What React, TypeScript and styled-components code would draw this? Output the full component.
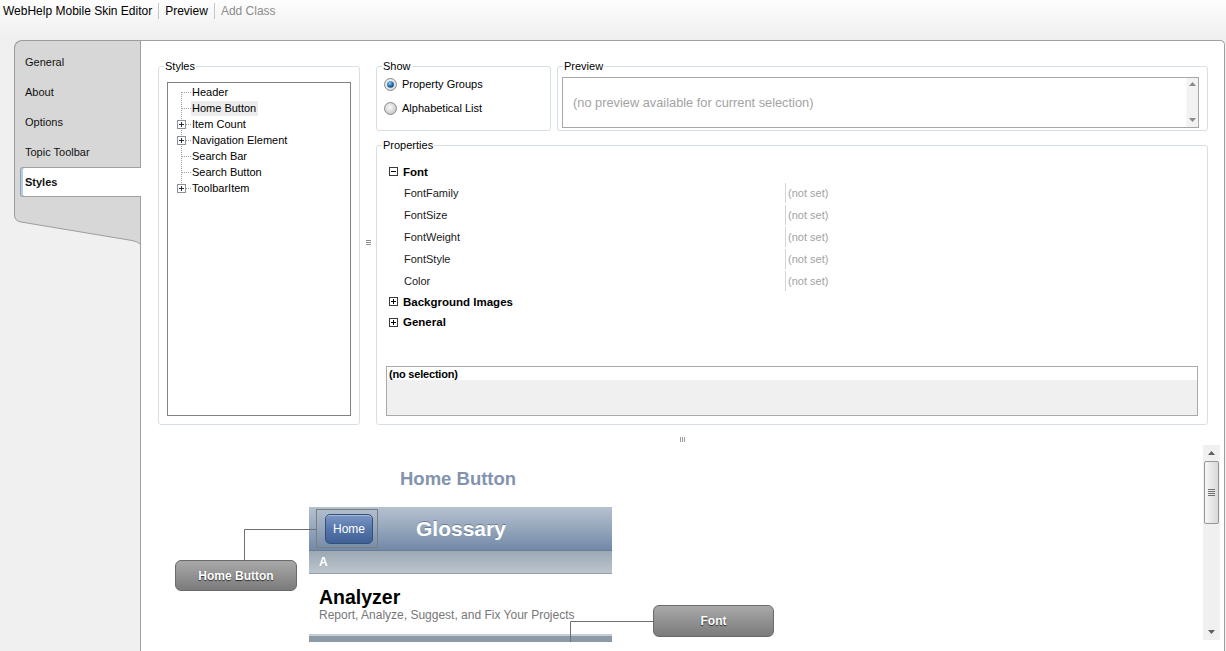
import React from "react";
import styled, { createGlobalStyle } from "styled-components";

const GlobalStyle = createGlobalStyle`
  *, *::before, *::after { box-sizing: border-box; }
  html, body { margin: 0; padding: 0; height: 100%; overflow: hidden; }
  body {
    font-family: "Liberation Sans", Arial, sans-serif;
    font-size: 11px;
    color: #000;
    background: linear-gradient(#fdfdfd 0px, #f0f0f0 36px);
  }
  #root { height: 100%; }
`;

const Window = styled.div`
  height: 100vh;
  display: flex;
  flex-direction: column;
`;

const TopBar = styled.div`
  height: 22px;
  display: flex;
  align-items: center;
  padding-left: 3px;
  font-size: 12px;
`;

const MenuItem = styled.span<{ $disabled?: boolean }>`
  color: ${(p) => (p.$disabled ? "#8c8c8c" : "#000")};
  padding: 0 6px;
  &:first-child { padding-left: 0; }
`;

const MenuSep = styled.span`
  width: 1px;
  height: 16px;
  background: #c6c6c6;
`;

const Workspace = styled.div`
  flex: 1;
  min-height: 0;
  display: flex;
  margin-top: 18px;
  padding-left: 14px;
  padding-right: 1px;
`;

const TabColumn = styled.div`
  width: 126px;
  flex: none;
  display: flex;
  flex-direction: column;
`;

const TabList = styled.div`
  background: #d7d7d7;
  border-top: 1px solid #9c9c9c;
  border-left: 1px solid #9c9c9c;
  border-top-left-radius: 8px;
  padding: 6px 0 13px 0;
  display: flex;
  flex-direction: column;
`;

const Tab = styled.div<{ $active?: boolean }>`
  height: 30px;
  display: flex;
  align-items: center;
  margin-left: 5px;
  padding-left: 4px;
  border: 1px solid transparent;
  border-right: none;
  color: #111;
  ${(p) =>
    p.$active &&
    `
    position: relative;
    z-index: 2;
    margin-right: -1px;
    background: #fff;
    border-color: #a0a0a0;
    border-top-left-radius: 3px;
    border-bottom-left-radius: 3px;
    box-shadow: inset 2px 0 0 #a8d0f4;
    font-weight: bold;
  `}
`;

const MainPanel = styled.div`
  flex: 1;
  position: relative;
  background: #fff;
  border-top: 1px solid #a0a0a0;
  border-left: 1px solid #a0a0a0;
  border-right: 1px solid #a0a0a0;
  border-top-right-radius: 5px;
  display: flex;
  flex-direction: column;
`;

const EditorArea = styled.div`
  display: flex;
  padding: 18px 0 0 17px;
  height: 384px;
`;

const Group = styled.fieldset<{ $w?: number }>`
  margin: 0;
  padding: 0;
  min-width: 0;
  border: 1px solid #d5dfe5;
  border-radius: 3px;
  ${(p) => (p.$w ? `width: ${p.$w}px; flex: none;` : "flex: 1;")}
  display: flex;
  flex-direction: column;
`;

const Legend = styled.legend`
  margin-left: 5px;
  padding: 0 1px;
  font-size: 11px;
  line-height: 14px;
  color: #000;
`;

const GroupBody = styled.div<{ $pad: string }>`
  flex: 1;
  min-height: 0;
  padding: ${(p) => p.$pad};
  display: flex;
  flex-direction: column;
`;

const TreeBox = styled.div`
  flex: 1;
  border: 1px solid #828282;
  background: #fff;
  padding-top: 1px;
`;

const TreeRow = styled.div`
  height: 16px;
  display: flex;
  align-items: center;
  padding-left: 9px;
`;

const TreeLabel = styled.span<{ $selected?: boolean }>`
  margin-left: -1px;
  padding: 1px 2px 1px 1px;
  line-height: 13px;
  background: ${(p) => (p.$selected ? "#ececec" : "transparent")};
`;

const VGrip = styled.div`
  width: 16px;
  flex: none;
  display: flex;
  align-items: center;
  justify-content: center;
`;

const RightColumn = styled.div`
  width: 832px;
  flex: none;
  display: flex;
  flex-direction: column;
  gap: 7px;
`;

const TopRow = styled.div`
  height: 72px;
  display: flex;
  gap: 6px;
`;

const RadioRow = styled.label`
  height: 16px;
  display: flex;
  align-items: center;
  gap: 5px;
  & + & { margin-top: 8px; }
`;

const PreviewBox = styled.div`
  flex: 1;
  border: 1px solid #a7a7a7;
  display: flex;
`;

const PreviewText = styled.div`
  flex: 1;
  display: flex;
  align-items: center;
  padding: 0 0 1px 10px;
  font-size: 12.8px;
  color: #a3a3a3;
`;

const MiniScroll = styled.div`
  width: 12px;
  background: #f2f2f2;
  border-left: 1px solid #f8f8f8;
  display: flex;
  flex-direction: column;
  justify-content: space-between;
  align-items: center;
  padding: 4px 0 5px;
`;

const PropList = styled.div`
  flex: 1;
  display: flex;
  flex-direction: column;
  padding-top: 9px;
`;

const GroupHeader = styled.div<{ $h: number }>`
  height: ${(p) => p.$h}px;
  display: flex;
  align-items: center;
  gap: 5px;
  padding-left: 3px;
  font-weight: bold;
  font-size: 11.5px;
`;

const PropRow = styled.div`
  height: 22px;
  display: grid;
  grid-template-columns: 399px 1fr;
`;

const PropName = styled.div`
  display: flex;
  align-items: center;
  padding-left: 18px;
  color: #1a1a1a;
`;

const PropValue = styled.div`
  display: flex;
  align-items: center;
  margin: 1px 0;
  padding-left: 2px;
  border-left: 1px solid #d4d4d4;
  color: #a3a3a3;
`;

const DescBox = styled.div`
  height: 50px;
  border: 1px solid #a9a9a9;
  background: #f0f0f0;
`;

const DescTitle = styled.div`
  height: 13px;
  background: #fff;
  padding: 1px 0 0 2px;
  line-height: 13px;
  font-weight: bold;
  letter-spacing: -0.2px;
`;

const HSplitter = styled.div`
  height: 20px;
  display: flex;
  justify-content: center;
  padding-top: 12px;
`;

const CanvasRow = styled.div`
  height: 197px;
  display: flex;
`;

const Diagram = styled.div`
  flex: 1;
  position: relative;
  overflow: hidden;
  font-family: "Liberation Sans", Arial, sans-serif;
`;

const DiagramTitle = styled.div`
  position: absolute;
  left: 259px;
  top: 24px;
  line-height: 20px;
  font-size: 18.5px;
  font-weight: bold;
  color: #8294ad;
`;

const Phone = styled.div`
  position: absolute;
  left: 168px;
  top: 62px;
  width: 303px;
  height: 150px;
  background: #fff;
  display: flex;
  flex-direction: column;
`;

const PhoneHeader = styled.div`
  height: 44px;
  flex: none;
  display: flex;
  align-items: flex-start;
  padding-left: 7px;
  background: linear-gradient(#b5c1cf, #95a6bc 50%, #7189a8);
  border-bottom: 1px solid #697d97;
`;

const HomeOutline = styled.div`
  margin-top: 2px;
  border: 1px solid #7d7d7d;
  padding: 4px 4px 3px 8px;
`;

const HomeBtn = styled.div`
  width: 48px;
  height: 30px;
  border: 1px solid #34507c;
  border-radius: 5px;
  background: linear-gradient(#7c97c4, #5676aa 50%, #3f6096);
  box-shadow: inset 0 1px 0 rgba(255, 255, 255, 0.35);
  color: #fff;
  font-size: 12px;
  display: flex;
  align-items: center;
  justify-content: center;
`;

const PhoneTitle = styled.div`
  margin-left: 38px;
  align-self: center;
  color: #fff;
  font-size: 21px;
  font-weight: bold;
  text-shadow: 0 -1px 0 rgba(60, 80, 110, 0.5);
`;

const SectionBar = styled.div`
  height: 23px;
  flex: none;
  display: flex;
  align-items: center;
  padding-left: 10px;
  background: linear-gradient(#9ba8b4, #bcc5cd);
  border-bottom: 1px solid #939fab;
  color: #fff;
  font-size: 12px;
  font-weight: bold;
`;

const ItemBody = styled.div`
  height: 60px;
  flex: none;
  padding: 12px 0 0 10px;
  display: flex;
  flex-direction: column;
`;

const ItemTitle = styled.div`
  font-size: 19.5px;
  font-weight: bold;
  line-height: 22px;
  color: #000;
`;

const ItemSub = styled.div`
  font-size: 12px;
  line-height: 15px;
  color: #777;
`;

const PhoneFooter = styled.div`
  flex: 1;
  border-top: 2px solid #c7ced5;
  background: #8c9aa8;
`;

const Callout = styled.div<{ $x: number; $y: number; $w: number; $h: number }>`
  position: absolute;
  left: ${(p) => p.$x}px;
  top: ${(p) => p.$y}px;
  width: ${(p) => p.$w}px;
  height: ${(p) => p.$h}px;
  border: 1px solid #6a6a6a;
  border-radius: 6px;
  background: linear-gradient(#a9a9a9, #7b7b7b);
  color: #fff;
  font-size: 12px;
  font-weight: bold;
  text-shadow: 0 1px 1px #2a2a2a;
  display: flex;
  align-items: center;
  justify-content: center;
`;

const Connectors = styled.svg`
  position: absolute;
  left: 0;
  top: 0;
  pointer-events: none;
`;

const VScroll = styled.div`
  width: 17px;
  flex: none;
  margin: 0 4px 2px 0;
  background: #f0f0f0;
  display: flex;
  flex-direction: column;
  align-items: center;
`;

const ScrollBtn = styled.div`
  height: 16px;
  width: 100%;
  flex: none;
  display: flex;
  align-items: center;
  justify-content: center;
`;

const Thumb = styled.div`
  width: 15px;
  height: 63px;
  flex: none;
  border: 1px solid #979797;
  border-radius: 2px;
  background: linear-gradient(90deg, #f7f7f7, #e7e7e7 50%, #d9d9d9);
  display: flex;
  align-items: center;
  justify-content: center;
`;

const Track = styled.div`
  flex: 1;
`;

function Arrow({ dir, color = "#606060" }: { dir: "up" | "down"; color?: string }) {
  return (
    <svg width="7" height="4" viewBox="0 0 7 4">
      <path d={dir === "up" ? "M3.5 0 L7 4 L0 4 Z" : "M0 0 L7 0 L3.5 4 Z"} fill={color} />
    </svg>
  );
}

function Branch({ pos, expandable }: { pos: "first" | "mid" | "last"; expandable: boolean }) {
  const y1 = pos === "first" ? 8 : 0;
  const y2 = pos === "last" ? 9 : 16;
  return (
    <svg width="15" height="16" viewBox="0 0 15 16">
      <line x1="4.5" y1={y1} x2="4.5" y2={y2} stroke="#a0a0a0" strokeDasharray="1 1" />
      <line x1="5" y1="8.5" x2="15" y2="8.5" stroke="#a0a0a0" strokeDasharray="1 1" />
      {expandable && (
        <>
          <rect x="0.5" y="4.5" width="8" height="8" fill="#fff" stroke="#8f8f8f" />
          <line x1="2" y1="8.5" x2="7" y2="8.5" stroke="#1f2f45" />
          <line x1="4.5" y1="6" x2="4.5" y2="11" stroke="#1f2f45" />
        </>
      )}
    </svg>
  );
}

function ExpandBox({ open }: { open: boolean }) {
  return (
    <svg width="9" height="9" viewBox="0 0 9 9">
      <rect x="0.5" y="0.5" width="8" height="8" fill="#fff" stroke="#3a3a3a" />
      <line x1="2" y1="4.5" x2="7" y2="4.5" stroke="#000" />
      {!open && <line x1="4.5" y1="2" x2="4.5" y2="7" stroke="#000" />}
    </svg>
  );
}

function Radio({ on }: { on: boolean }) {
  const id = on ? "rOn" : "rOff";
  return (
    <svg width="13" height="13" viewBox="0 0 13 13">
      <defs>
        <radialGradient id={id} cx="45%" cy="40%" r="60%">
          <stop offset="0" stopColor="#fbfbfb" />
          <stop offset="1" stopColor={on ? "#d8d8d8" : "#c4c4c4"} />
        </radialGradient>
        <radialGradient id="rDot" cx="40%" cy="35%" r="65%">
          <stop offset="0" stopColor="#9ad6ff" />
          <stop offset="0.5" stopColor="#2c7fc4" />
          <stop offset="1" stopColor="#0e3f73" />
        </radialGradient>
      </defs>
      <circle cx="6.5" cy="6.5" r="6" fill={`url(#${id})`} stroke="#8c8c8c" />
      {on && <circle cx="6.5" cy="6.5" r="3.3" fill="url(#rDot)" />}
    </svg>
  );
}

function TabFoot() {
  return (
    <svg width="126" height="36" viewBox="0 0 126 36" style={{ display: "block" }}>
      <path d="M0.5 0 V5 Q0.5 11 7 12 L118 30.5 Q124 31.5 126 34 V0 Z" fill="#d7d7d7" />
      <path d="M0.5 0 V5 Q0.5 11 7 12 L118 30.5 Q124 31.5 126 34" fill="none" stroke="#9c9c9c" />
    </svg>
  );
}

const tabs = ["General", "About", "Options", "Topic Toolbar", "Styles"];

const styleItems = [
  { name: "Header", expandable: false },
  { name: "Home Button", expandable: false, selected: true },
  { name: "Item Count", expandable: true },
  { name: "Navigation Element", expandable: true },
  { name: "Search Bar", expandable: false },
  { name: "Search Button", expandable: false },
  { name: "ToolbarItem", expandable: true },
];

const fontProps = ["FontFamily", "FontSize", "FontWeight", "FontStyle", "Color"];

export default function App() {
  return (
    <>
      <GlobalStyle />
      <Window>
        <TopBar>
          <MenuItem>WebHelp Mobile Skin Editor</MenuItem>
          <MenuSep />
          <MenuItem>Preview</MenuItem>
          <MenuSep />
          <MenuItem $disabled>Add Class</MenuItem>
        </TopBar>
        <Workspace>
          <TabColumn>
            <TabList>
              {tabs.map((t) => (
                <Tab key={t} $active={t === "Styles"}>
                  {t}
                </Tab>
              ))}
            </TabList>
            <TabFoot />
          </TabColumn>
          <MainPanel>
            <EditorArea>
              <Group $w={202}>
                <Legend>Styles</Legend>
                <GroupBody $pad="9px 8px 8px 8px">
                  <TreeBox>
                    {styleItems.map((it, i) => (
                      <TreeRow key={it.name}>
                        <Branch
                          pos={i === 0 ? "first" : i === styleItems.length - 1 ? "last" : "mid"}
                          expandable={it.expandable}
                        />
                        <TreeLabel $selected={it.selected}>{it.name}</TreeLabel>
                      </TreeRow>
                    ))}
                  </TreeBox>
                </GroupBody>
              </Group>
              <VGrip>
                <svg width="5" height="5" viewBox="0 0 5 5">
                  <path d="M0 0.5 H5 M0 2.5 H5 M0 4.5 H5" stroke="#8a8a8a" />
                </svg>
              </VGrip>
              <RightColumn>
                <TopRow>
                  <Group $w={175}>
                    <Legend>Show</Legend>
                    <GroupBody $pad="3px 0 0 7px">
                      <RadioRow>
                        <Radio on />
                        Property Groups
                      </RadioRow>
                      <RadioRow>
                        <Radio on={false} />
                        Alphabetical List
                      </RadioRow>
                    </GroupBody>
                  </Group>
                  <Group>
                    <Legend>Preview</Legend>
                    <GroupBody $pad="4px 8px 2px 4px">
                      <PreviewBox>
                        <PreviewText>(no preview available for current selection)</PreviewText>
                        <MiniScroll>
                          <Arrow dir="up" color="#8a8a8a" />
                          <Arrow dir="down" color="#8a8a8a" />
                        </MiniScroll>
                      </PreviewBox>
                    </GroupBody>
                  </Group>
                </TopRow>
                <Group>
                  <Legend>Properties</Legend>
                  <GroupBody $pad="0 9px 8px 9px">
                    <PropList>
                      <GroupHeader $h={21}>
                        <ExpandBox open />
                        Font
                      </GroupHeader>
                      {fontProps.map((p) => (
                        <PropRow key={p}>
                          <PropName>{p}</PropName>
                          <PropValue>(not set)</PropValue>
                        </PropRow>
                      ))}
                      <GroupHeader $h={19}>
                        <ExpandBox open={false} />
                        Background Images
                      </GroupHeader>
                      <GroupHeader $h={22}>
                        <ExpandBox open={false} />
                        General
                      </GroupHeader>
                    </PropList>
                    <DescBox>
                      <DescTitle>(no selection)</DescTitle>
                    </DescBox>
                  </GroupBody>
                </Group>
              </RightColumn>
            </EditorArea>
            <HSplitter>
              <svg width="5" height="5" viewBox="0 0 5 5">
                <path d="M0.5 0 V5 M2.5 0 V5 M4.5 0 V5" stroke="#9a9a9a" />
              </svg>
            </HSplitter>
            <CanvasRow>
              <Diagram>
                <DiagramTitle>Home Button</DiagramTitle>
                <Phone>
                  <PhoneHeader>
                    <HomeOutline>
                      <HomeBtn>Home</HomeBtn>
                    </HomeOutline>
                    <PhoneTitle>Glossary</PhoneTitle>
                  </PhoneHeader>
                  <SectionBar>A</SectionBar>
                  <ItemBody>
                    <ItemTitle>Analyzer</ItemTitle>
                    <ItemSub>Report, Analyze, Suggest, and Fix Your Projects</ItemSub>
                  </ItemBody>
                  <PhoneFooter />
                </Phone>
                <Connectors width="700" height="197">
                  <polyline points="103.5,115 103.5,84.5 175,84.5" fill="none" stroke="#707070" />
                  <polyline points="512,176.5 429.5,176.5 429.5,197" fill="none" stroke="#707070" />
                </Connectors>
                <Callout $x={34} $y={115} $w={122} $h={31}>
                  Home Button
                </Callout>
                <Callout $x={512} $y={160} $w={121} $h={32}>
                  Font
                </Callout>
              </Diagram>
              <VScroll>
                <ScrollBtn>
                  <Arrow dir="up" />
                </ScrollBtn>
                <Thumb>
                  <svg width="7" height="8" viewBox="0 0 7 8">
                    <path d="M0 0.5 H7 M0 2.5 H7 M0 4.5 H7 M0 6.5 H7" stroke="#707070" />
                  </svg>
                </Thumb>
                <Track />
                <ScrollBtn>
                  <Arrow dir="down" />
                </ScrollBtn>
              </VScroll>
            </CanvasRow>
          </MainPanel>
        </Workspace>
      </Window>
    </>
  );
}
